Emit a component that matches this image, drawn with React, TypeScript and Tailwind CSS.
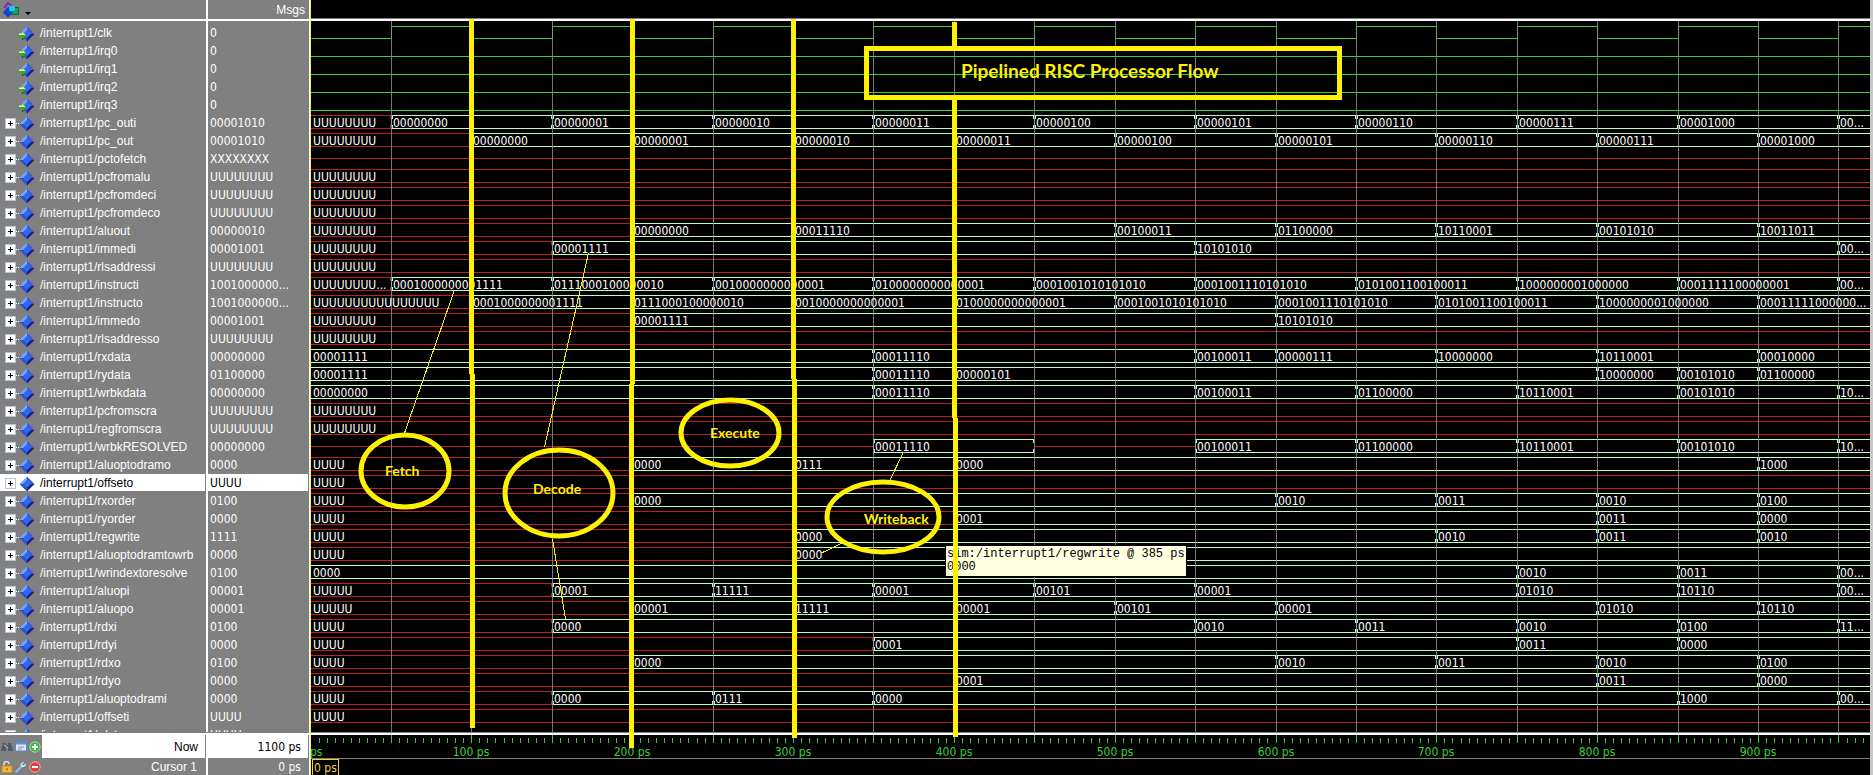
import React from "react";

type Kind = "bus" | "undef" | "mid" | "bit" | "clock";
type Segment = { t: number; label: string; kind: Kind };
type Signal = { name: string; value: string; segments: Segment[]; input?: boolean; selected?: boolean };

const PX_PER_PS = 1.6084;
const END_PS = 1200;
const ROW = 18;
const TOP = 3;

const px = (t: number) => Math.floor(t * PX_PER_PS);

/* Each segment is written "time:label"; a label of U's is undefined, "~" is a floating level. */
const parse = (spec: string): Segment[] =>
  spec.split(" ").map((part) => {
    const [t, label] = part.split(":");
    if (label === "~") return { t: Number(t), label: "", kind: "mid" };
    if (label === "_") return { t: Number(t), label: "", kind: "bit" };
    if (label === "clk") return { t: Number(t), label: "", kind: "clock" };
    return { t: Number(t), label, kind: label.startsWith("U") ? "undef" : "bus" };
  });

const U4 = "UUUU";
const U8 = "UUUUUUUU";

const bus = (name: string, value: string, spec: string, selected = false): Signal => ({
  name: `/interrupt1/${name}`,
  value,
  segments: spec ? parse(spec) : [],
  selected,
});
const bit = (name: string, spec: string): Signal => ({
  name: `/interrupt1/${name}`,
  value: "0",
  segments: parse(spec),
  input: true,
});

const SIGNALS: Signal[] = [
  bit("clk", "0:clk"),
  bit("irq0", "0:_"),
  bit("irq1", "0:_"),
  bit("irq2", "0:_"),
  bit("irq3", "0:_"),
  bus("pc_outi", "00001010", "0:UUUUUUUU 50:00000000 150:00000001 250:00000010 350:00000011 450:00000100 550:00000101 650:00000110 750:00000111 850:00001000 950:00..."),
  bus("pc_out", "00001010", "0:UUUUUUUU 100:00000000 200:00000001 300:00000010 400:00000011 500:00000100 600:00000101 700:00000110 800:00000111 900:00001000"),
  bus("pctofetch", "XXXXXXXX", "0:~"),
  bus("pcfromalu", U8, "0:UUUUUUUU"),
  bus("pcfromdeci", U8, "0:UUUUUUUU"),
  bus("pcfromdeco", U8, "0:UUUUUUUU"),
  bus("aluout", "00000010", "0:UUUUUUUU 200:00000000 300:00011110 500:00100011 600:01100000 700:10110001 800:00101010 900:10011011"),
  bus("immedi", "00001001", "0:UUUUUUUU 150:00001111 550:10101010 950:00..."),
  bus("rlsaddressi", U8, "0:UUUUUUUU"),
  bus("instructi", "1001000000...", "0:UUUUUUUU... 50:0001000000001111 150:0111000100000010 250:0010000000000001 350:0100000000000001 450:0001001010101010 550:0001001110101010 650:0101001100100011 750:1000000001000000 850:0001111100000001 950:00..."),
  bus("instructo", "1001000000...", "0:UUUUUUUUUUUUUUUU 100:0001000000001111 200:0111000100000010 300:0010000000000001 400:0100000000000001 500:0001001010101010 600:0001001110101010 700:0101001100100011 800:1000000001000000 900:00011111000000..."),
  bus("immedo", "00001001", "0:UUUUUUUU 200:00001111 600:10101010"),
  bus("rlsaddresso", U8, "0:UUUUUUUU"),
  bus("rxdata", "00000000", "0:00001111 350:00011110 550:00100011 600:00000111 700:10000000 800:10110001 900:00010000"),
  bus("rydata", "01100000", "0:00001111 350:00011110 400:00000101 800:10000000 850:00101010 900:01100000"),
  bus("wrbkdata", "00000000", "0:00000000 350:00011110 550:00100011 650:01100000 750:10110001 850:00101010 950:10..."),
  bus("pcfromscra", U8, "0:UUUUUUUU"),
  bus("regfromscra", U8, "0:UUUUUUUU"),
  bus("wrbkRESOLVED", "00000000", "0:~ 350:00011110 450:~ 550:00100011 650:01100000 750:10110001 850:00101010 950:10..."),
  bus("aluoptodramo", "0000", "0:UUUU 200:0000 300:0111 400:0000 900:1000"),
  bus("offseto", U4, "0:UUUU", true),
  bus("rxorder", "0100", "0:UUUU 200:0000 600:0010 700:0011 800:0010 900:0100"),
  bus("ryorder", "0000", "0:UUUU 400:0001 800:0011 900:0000"),
  bus("regwrite", "1111", "0:UUUU 300:0000 700:0010 800:0011 900:0010"),
  bus("aluoptodramtowrb", "0000", "0:UUUU 300:0000"),
  bus("wrindextoresolve", "0100", "0:0000 750:0010 850:0011 950:00..."),
  bus("aluopi", "00001", "0:UUUUU 150:00001 250:11111 350:00001 450:00101 550:00001 750:01010 850:10110 950:00..."),
  bus("aluopo", "00001", "0:UUUUU 200:00001 300:11111 400:00001 500:00101 600:00001 800:01010 900:10110"),
  bus("rdxi", "0100", "0:UUUU 150:0000 550:0010 650:0011 750:0010 850:0100 950:11..."),
  bus("rdyi", "0000", "0:UUUU 350:0001 750:0011 850:0000"),
  bus("rdxo", "0100", "0:UUUU 200:0000 600:0010 700:0011 800:0010 900:0100"),
  bus("rdyo", "0000", "0:UUUU 400:0001 800:0011 900:0000"),
  bus("aluoptodrami", "0000", "0:UUUU 150:0000 250:0111 350:0000 850:1000 950:00..."),
  bus("offseti", U4, "0:UUUU"),
  bus("rdst", U4, ""),
];

const NAME_FONT = "font-['Liberation_Sans',Arial,sans-serif]";
const VALUE_FONT = "font-['DejaVu_Sans_Condensed','DejaVu_Sans',sans-serif]";
const NOTE_FONT = "font-['Lato',Calibri,sans-serif]";

function Diamond({ input }: { input?: boolean }) {
  return (
    <svg width="16" height="16" viewBox="0 0 16 16" className="shrink-0" aria-hidden="true">
      <path d="M8 0.5L8 8L0.5 8Z" fill="#7aa4f6" />
      <path d="M8 0.5L15.5 8L8 8Z" fill="#3a5fd0" />
      <path d="M0.5 8L8 8L8 15.5Z" fill="#2f50c8" />
      <path d="M15.5 8L8 15.5L8 8Z" fill="#1b1f86" />
      <path d="M8 4L12 8L8 12L4 8Z" fill="#2f6af0" />
      {input && (
        <>
          <path d="M0 7.5h3V5L7.5 9.5L3 14V11.5H0Z" fill="#2fae1c" />
          <path d="M0 7.5h3.5V6L6.5 9H0Z" fill="#f4f5b0" />
          <path d="M3 12.5h2L3 14.5Z" fill="#0c3c08" />
        </>
      )}
    </svg>
  );
}

function ExpandButton({ name }: { name: string }) {
  return (
    <button
      type="button"
      aria-label={`Expand ${name}`}
      className="flex size-[11px] shrink-0 items-center justify-center border border-[#b9c4d6] bg-white"
    >
      <svg width="5" height="5" viewBox="0 0 5 5" aria-hidden="true">
        <path d="M2 0h1v5h-1zM0 2h5v1h-5z" fill="#000" />
      </svg>
    </button>
  );
}

function ShapesIcon() {
  return (
    <svg width="18" height="16" viewBox="0 0 18 16" aria-hidden="true">
      <path d="M1 6L5 1L9 4" fill="none" stroke="#9a1fae" strokeWidth="2" />
      <rect x="8.5" y="5.5" width="7" height="7" fill="#1f9d5c" stroke="#0d6b3b" />
      <path d="M5 4.5L10.5 10L5 15.5L0 10.5Z" fill="#0a45d8" />
      <circle cx="9" cy="6.5" r="3" fill="#1cc8f2" />
    </svg>
  );
}

function IconButton({ label, children }: { label: string; children: React.ReactNode }) {
  return (
    <button type="button" aria-label={label} className="flex size-3 items-center justify-center">
      <svg width="12" height="12" viewBox="0 0 12 12" aria-hidden="true">
        {children}
      </svg>
    </button>
  );
}

function SignalTable() {
  return (
    <table className="w-full table-fixed border-separate border-spacing-0 text-xs text-white">
      <colgroup>
        <col className="w-[208px]" />
        <col />
      </colgroup>
      <thead>
        <tr>
          <th scope="col" className="h-[21px] border-r-2 border-b-2 border-white p-0">
            <button type="button" aria-label="Wave options" className="flex items-center gap-1 pl-[3px]">
              <ShapesIcon />
              <svg width="6" height="12" viewBox="0 0 6 12" aria-hidden="true">
                <path d="M0 8h6L3 11Z" fill="#000" />
              </svg>
            </button>
          </th>
          <th scope="col" className={`h-[21px] border-b-2 border-white p-0 pr-1 text-right font-normal ${NAME_FONT}`}>
            Msgs
          </th>
        </tr>
      </thead>
      <tbody>
        <tr>
          <td className="h-[3px] border-r-2 border-white p-0" />
          <td className="h-[3px] p-0" />
        </tr>
        {SIGNALS.map((s) => (
          <tr key={s.name} className="h-[18px]">
            <td className="border-r-2 border-white p-0">
              <div
                className={`mr-px mb-px flex h-[17px] items-center pt-[2px] pl-[5px] ${s.selected ? "bg-white text-black" : ""}`}
              >
                {s.input ? (
                  <span className="w-[14px]" />
                ) : (
                  <>
                    <ExpandButton name={s.name} />
                    <span className="w-[3px] border-t border-dotted border-white" />
                  </>
                )}
                <Diamond input={s.input} />
                <span className={`pl-[5px] leading-[17px] whitespace-nowrap ${NAME_FONT}`}>{s.name}</span>
              </div>
            </td>
            <td className="p-0">
              <div
                className={`mr-px mb-px h-[17px] pl-[2px] leading-[19px] whitespace-nowrap ${VALUE_FONT} ${s.selected ? "bg-white text-black" : ""}`}
              >
                {s.value}
              </div>
            </td>
          </tr>
        ))}
      </tbody>
    </table>
  );
}

function CursorPane() {
  return (
    <div className="grid h-10 shrink-0 grid-cols-[208px_1fr] grid-rows-[23px_17px] text-xs">
      <div className="flex border-r-2 border-white pr-px">
        <div className="flex w-[42px] items-center gap-[2px] pl-[1px]">
          <IconButton label="Find">
            <path d="M2 2h3v2h2V2h3l2 8H7V7H5v3H0Z" fill="#555b66" />
            <path d="M3 4L7 7" stroke="#c9ced8" />
          </IconButton>
          <IconButton label="Window list">
            <rect x="0.5" y="1" width="11" height="9" fill="#dfe9f8" stroke="#5b86c8" />
            <rect x="1" y="1" width="10" height="2.5" fill="#5b8fe0" />
            <path d="M3 6h6M3 8h4" stroke="#7f93b0" />
          </IconButton>
          <IconButton label="Add cursor">
            <circle cx="6" cy="6" r="5.2" fill="#42b649" stroke="#9bdc9d" />
            <path d="M6 3v6M3 6h6" stroke="#fff" strokeWidth="2" />
          </IconButton>
        </div>
        <div className={`flex-1 bg-white pr-[7px] text-right leading-[25px] text-black ${NAME_FONT}`}>Now</div>
      </div>
      <div className={`mr-px bg-white pr-[7px] text-right leading-[25px] text-black ${VALUE_FONT}`}>1100 ps</div>
      <div className="flex border-r-2 border-white pr-px">
        <div className="flex w-[42px] items-center gap-[2px] pl-[1px]">
          <IconButton label="Lock cursor">
            <path d="M3 5V3a2.5 2.5 0 0 1 5 0" fill="none" stroke="#d8dbe0" strokeWidth="1.5" />
            <rect x="1" y="5" width="10" height="6.5" fill="#f2b640" stroke="#c88a1c" />
            <path d="M6 7v2.5" stroke="#7a5208" />
          </IconButton>
          <IconButton label="Cursor properties">
            <path d="M1.5 10.5L7 5" stroke="#8db5f0" strokeWidth="2.4" strokeLinecap="round" />
            <path d="M10.5 2.5L8.5 4.5L7 3.5L9 1A3 3 0 0 0 6 5.5A3 3 0 0 0 11 3.5Z" fill="#cfe0fa" />
          </IconButton>
          <IconButton label="Delete cursor">
            <circle cx="6" cy="6" r="5.2" fill="#e04338" stroke="#f0a59e" />
            <path d="M3 6h6" stroke="#fff" strokeWidth="2" />
          </IconButton>
        </div>
        <div className={`flex-1 pr-2 text-right leading-[19px] text-white ${NAME_FONT}`}>Cursor 1</div>
      </div>
      <div className={`pr-2 text-right leading-[19px] text-white ${VALUE_FONT}`}>0 ps</div>
    </div>
  );
}

const GREEN = "#c2fac2";
const RED = "#b92020";
const BIT = "#3ad03a";

function SignalTrace({ signal, row }: { signal: Signal; row: number }) {
  const y = TOP + row * ROW;
  return (
    <g>
      {signal.segments.map((s, i) => {
        const x1 = px(s.t);
        const next = signal.segments[i + 1];
        const x2 = px(next ? next.t : END_PS);
        if (s.kind === "bit") return <rect key={i} x={x1} y={y + 14} width={x2 - x1} height="1" fill={BIT} />;
        if (s.kind === "mid") return <rect key={i} x={x1} y={y + 8} width={x2 - x1} height="1" fill={RED} />;
        if (s.kind === "clock") {
          let d = `M0.5 ${y + 14.5}`;
          for (let t = 50; t < END_PS; t += 50) {
            d += `H${px(t) + 0.5}V${t % 100 === 50 ? y + 2.5 : y + 14.5}`;
          }
          return <path key={i} d={d} fill="none" stroke={BIT} />;
        }
        const color = s.kind === "bus" ? GREEN : RED;
        const prev = signal.segments[i - 1];
        return (
          <g key={i} fill={color}>
            <rect x={x1} y={y + 1} width={x2 - x1} height="1" />
            <rect x={x1} y={y + 14} width={x2 - x1} height="1" />
            {next && (
              <>
                <rect x={x2 - 1} y={y + 1} width="1" height="4" />
                <rect x={x2 - 1} y={y + 11} width="1" height="4" />
              </>
            )}
            {prev && (
              <>
                <rect x={x1} y={y + 4} width="1" height="8" />
                <rect x={x1 + 1} y={y + 1} width="1" height="4" />
                <rect x={x1 + 1} y={y + 11} width="1" height="4" />
              </>
            )}
          </g>
        );
      })}
    </g>
  );
}

const range = (from: number, to: number, step: number) => {
  const out: number[] = [];
  for (let v = from; v <= to; v += step) out.push(v);
  return out;
};

function WaveCanvas() {
  return (
    <div className="relative min-h-0 flex-1 overflow-hidden">
      <svg className="absolute inset-0 h-full w-full" aria-hidden="true">
        {SIGNALS.map((s, i) => (
          <SignalTrace key={s.name} signal={s} row={i} />
        ))}
        {range(50, 1150, 50).map((t) => (
          <rect key={t} x={px(t)} y="0" width="1" height="100%" fill="#8c8c8c" opacity="0.85" />
        ))}
      </svg>
      <div className={`relative pt-[3px] text-xs text-white ${VALUE_FONT}`}>
        {SIGNALS.map((s) => (
          <div key={s.name} className="flex h-[18px]">
            {s.segments.map((seg, i) => {
              const next = s.segments[i + 1];
              return (
                <span
                  key={i}
                  className="shrink-0 pl-[2px] leading-[19px] whitespace-nowrap"
                  style={{ width: px(next ? next.t : END_PS) - px(seg.t) }}
                >
                  {seg.label}
                </span>
              );
            })}
          </div>
        ))}
      </div>
    </div>
  );
}

function Timeline() {
  return (
    <div className="h-10 shrink-0 overflow-hidden">
      <div className="h-[23px]">
        <svg className="block h-2 w-full" aria-hidden="true">
          {range(5, 1150, 5).map((t) => (
            <rect key={t} x={px(t)} y={t % 50 ? 3 : 0} width="1" height={t % 50 ? 5 : 8} fill={BIT} />
          ))}
        </svg>
        <div className={`flex text-xs leading-[18px] text-[#3ad03a] ${VALUE_FONT}`}>
          {range(0, 900, 100).map((t) => (
            <span
              key={t}
              className="-ml-20 shrink-0 text-center whitespace-nowrap"
              style={{ width: 160, marginRight: px(t + 100) - px(t) - 80 }}
            >
              {t} ps
            </span>
          ))}
        </div>
      </div>
      <div className="h-[17px] border-t border-[#808080]">
        <div
          className={`ml-px h-5 w-fit border border-[#f0d040] px-px text-xs leading-[17px] text-[#f0d040] ${VALUE_FONT}`}
        >
          0 ps
        </div>
      </div>
    </div>
  );
}

const STAGES = [
  { label: "Fetch", cx: 94, cy: 471, rx: 44, ry: 36, left: "left-[74px]", top: "top-[462px]" },
  { label: "Decode", cx: 248, cy: 493, rx: 54, ry: 43, left: "left-[222px]", top: "top-[480px]" },
  { label: "Execute", cx: 419, cy: 433, rx: 49, ry: 33, left: "left-[399px]", top: "top-[424px]" },
  { label: "Writeback", cx: 572, cy: 517, rx: 56, ry: 35, left: "left-[553px]", top: "top-[510px]" },
];

const MARKERS = [
  "M160.5 19V374M161.5 374V728",
  "M321.5 19V384M320.5 384V748",
  "M482.5 19V379M483.5 379V738",
  "M643.5 22V50M643.5 98V418M644.5 418V737",
];

const POINTERS = ["M143.5 290L93.5 433", "M277.5 253L233.5 447", "M241.5 539L254.5 619", "M592.5 452L578.5 481", "M531.5 543L510.5 553"];

function Annotations() {
  return (
    <div className={`pointer-events-none absolute inset-0 overflow-hidden font-bold text-[#fff200] ${NOTE_FONT}`}>
      <div className="absolute top-[545px] left-[634px] border border-black bg-[#ffffe1] px-px pt-[2px] pb-[2px] font-['Liberation_Mono','Courier_New',monospace] text-xs leading-[13px] font-normal whitespace-nowrap text-black">
        sim:/interrupt1/regwrite @ 385 ps
        <br />
        0000
      </div>
      <svg className="absolute inset-0 h-full w-full" fill="none" stroke="#fff200" aria-hidden="true">
        {MARKERS.map((d) => (
          <path key={d} d={d} strokeWidth="5" />
        ))}
        {POINTERS.map((d) => (
          <path key={d} d={d} strokeWidth="1" shapeRendering="crispEdges" />
        ))}
        {STAGES.map((s) => (
          <ellipse key={s.label} cx={s.cx} cy={s.cy} rx={s.rx} ry={s.ry} strokeWidth="5" />
        ))}
      </svg>
      <h1 className="absolute top-[46px] left-[553px] h-[54px] w-[478px] border-[5px] border-[#fff200] pl-[92px] text-[19px] leading-[40px] whitespace-nowrap">
        Pipelined RISC Processor Flow
      </h1>
      {STAGES.map((s) => (
        <span key={s.label} className={`absolute text-sm leading-[18px] ${s.left} ${s.top}`}>
          {s.label}
        </span>
      ))}
    </div>
  );
}

export default function App() {
  return (
    <div className="flex h-screen overflow-hidden bg-[#808080]">
      <section aria-label="Signals" className="flex w-[309px] shrink-0 flex-col">
        <div className="min-h-0 flex-1 overflow-hidden">
          <SignalTable />
        </div>
        <div className="h-[3px] shrink-0 border-b-2 border-white" />
        <CursorPane />
      </section>
      <div className="w-px shrink-0 bg-white" />
      <div className="w-px shrink-0 bg-[#f2ee6a]" />
      <main className="relative flex min-w-0 flex-1 flex-col border-r-[3px] border-[#c8c8c8] bg-black">
        <div className="h-[18px] shrink-0" />
        <div className="h-[3px] shrink-0 border-t border-b-2 border-t-[#808080] border-b-white" />
        <WaveCanvas />
        <div className="h-[3px] shrink-0 border-t border-b-2 border-t-[#808080] border-b-white" />
        <Timeline />
        <Annotations />
      </main>
    </div>
  );
}
